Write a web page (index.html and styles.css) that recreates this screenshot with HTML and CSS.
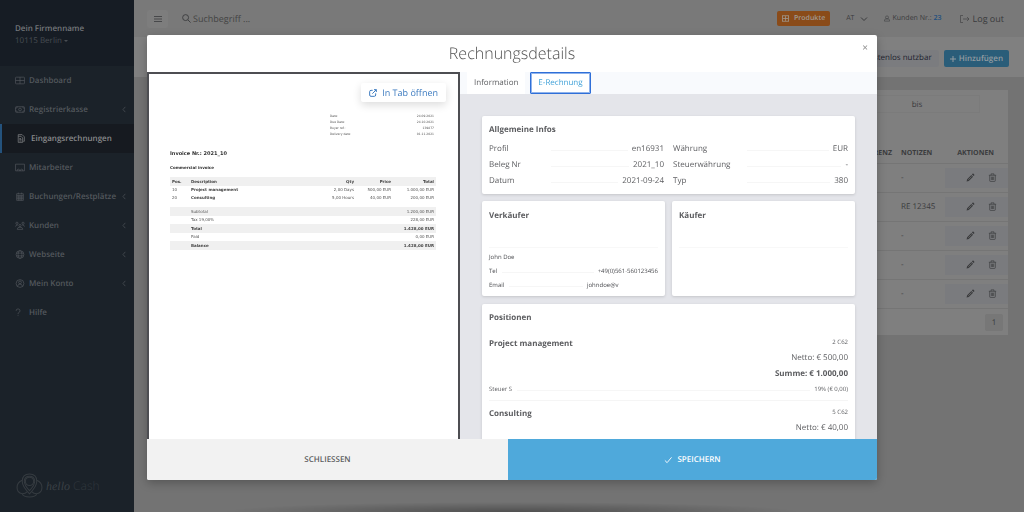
FILE: index.html
```html
<!DOCTYPE html>
<html lang="de">
<head>
<meta charset="utf-8">
<meta name="viewport" content="width=device-width, initial-scale=1">
<title>Eingangsrechnungen</title>
<link rel="stylesheet" href="styles.css">
</head>
<body>
<svg class="sprite" aria-hidden="true">
  <symbol id="chev-left" viewBox="0 0 6 10"><path d="M5 1 1.500 5 5 9"/></symbol>
  <symbol id="pencil" viewBox="0 0 16 16"><path fill="currentColor" stroke="none" d="M9.500 3.500 12.500 6.500 5 14 1 15 2 11zM10.500 2.500l1-1q1-1 2 0l1 1q1 1 0 2l-1 1z"/><path stroke="#7f7f7f" stroke-width="1" d="M4 12l6-6"/></symbol>
  <symbol id="trash" viewBox="0 0 16 16"><path d="M1.500 4h13M5.500 4V1.500h5V4M3 4v9.500q0 1.500 1.500 1.500h7q1.500 0 1.500-1.500V4M6 6.500v6M8 6.500v6M10 6.500v6"/></symbol>
</svg>
<div class="app">
  <aside class="sidebar">
    <header class="company">
      <strong class="company-name">Dein Firmenname</strong>
      <button class="company-place" type="button">10115 Berlin <span class="caret"></span></button>
    </header>
    <nav class="nav">
      <a class="nav-item" href="#"><svg class="nav-icon" viewBox="0 0 18 16"><rect x="1" y="2" width="16" height="12" rx="1"/><path d="M9 2v12M1 8h16"/></svg><span>Dashboard</span></a>
      <a class="nav-item" href="#"><svg class="nav-icon" viewBox="0 0 18 16"><rect x="1" y="3" width="16" height="10" rx="1"/><circle cx="9" cy="8" r="2.500"/><path d="M1 6q3 0 3-3M1 10q3 0 3 3M17 6q-3 0-3-3M17 10q-3 0-3 3"/></svg><span>Registrierkasse</span><svg class="chevron"><use href="#chev-left"/></svg></a>
      <a class="nav-item active" href="#" aria-current="page"><svg class="nav-icon" viewBox="0 0 18 16"><path d="M4 4V1h7l4 4v8h-2M4 4h5l3 3v8H4zM6 8h3M6 10h4M6 12.500h4"/></svg><span>Eingangsrechnungen</span></a>
      <a class="nav-item" href="#"><svg class="nav-icon" viewBox="0 0 18 16"><path d="M1 14V2h16v12zM4 14v-2q2-2 4 0v2M10 14v-2q2-2 4 0v2"/></svg><span>Mitarbeiter</span></a>
      <a class="nav-item" href="#"><svg class="nav-icon" viewBox="0 0 18 16"><path d="M3 3h12v12H3zM3 6h12M6 1v3M12 1v3M6 6v9M9 6v9M12 6v9M3 9h12M3 12h12"/></svg><span>Buchungen/Restplätze</span><svg class="chevron"><use href="#chev-left"/></svg></a>
      <a class="nav-item" href="#"><svg class="nav-icon" viewBox="0 0 18 16"><circle cx="9" cy="8" r="2"/><circle cx="3.500" cy="4" r="2"/><circle cx="14.500" cy="4" r="2"/><path d="M4 15q0-4 5-4t5 4zM1 10q0-3 4-3M17 10q0-3-4-3"/></svg><span>Kunden</span><svg class="chevron"><use href="#chev-left"/></svg></a>
      <a class="nav-item" href="#"><svg class="nav-icon" viewBox="0 0 18 16"><circle cx="9" cy="8" r="7"/><ellipse cx="9" cy="8" rx="3.500" ry="7"/><path d="M2.500 5.500h13M2.500 10.500h13"/></svg><span>Webseite</span><svg class="chevron"><use href="#chev-left"/></svg></a>
      <a class="nav-item" href="#"><svg class="nav-icon" viewBox="0 0 18 16"><circle cx="9" cy="8" r="7"/><circle cx="9" cy="6" r="2.500"/><path d="M4.500 13q1-4 4.500-4t4.500 4"/></svg><span>Mein Konto</span><svg class="chevron"><use href="#chev-left"/></svg></a>
      <a class="nav-item" href="#"><svg class="nav-icon" viewBox="0 0 18 16"><path d="M2 5q0-3.500 3.500-3.500T9 5q0 2-2 3t-1.500 3M5.500 13v1.500"/></svg><span>Hilfe</span></a>
    </nav>
    <div class="brand">
      <svg class="brand-mark" viewBox="0 0 26 24"><path d="M13 1q7 0 7 7 0 5-7 12Q6 13 6 8q0-7 7-7z"/><path d="M13 3q5 0 5 5 0 4-5 9-5-5-5-9 0-5 5-5z"/><circle cx="13" cy="8" r="4"/><path d="M6 7q-5 2-5 7t5 6q3 0 5-2M20 7q5 2 5 7t-5 6q-3 0-5-2M6 20q1 3 7 3t7-3"/></svg>
      <span class="brand-text"><em>hello</em> Cash</span>
    </div>
  </aside>

  <main class="main">
    <header class="topbar">
      <button class="menu-button" type="button" aria-label="Menü"><svg viewBox="0 0 8 8"><path d="M0 1.500h8M0 4h8M0 6.500h8"/></svg></button>
      <label class="search"><svg viewBox="0 0 10 10"><circle cx="4" cy="4" r="3.300"/><path d="m6.500 6.500 3 3"/></svg><input type="text" placeholder="Suchbegriff ..." aria-label="Suchbegriff"></label>
      <button class="products" type="button"><svg viewBox="0 0 9 8"><rect x=".5" y=".5" width="8" height="7"/><path d="M4.500 1v6M1 4h7"/></svg>Produkte</button>
      <button class="country" type="button">AT <svg viewBox="0 0 8 6"><path d="m1 1.500 3 3 3-3"/></svg></button>
      <span class="customer"><svg viewBox="0 0 8 8"><circle cx="4" cy="2.500" r="2"/><path d="M.5 7.500q0-3 2-3h3q2 0 2 3z"/></svg>Kunden Nr.: <b>23</b></span>
      <a class="logout" href="#"><svg viewBox="0 0 10 8"><path d="M3 .5H.5v7H3M3 4h6M7 2l2 2-2 2"/></svg>Log out</a>
    </header>
    <div class="pagebar">
      <span class="free">kostenlos nutzbar</span>
      <button class="add" type="button"><svg viewBox="0 0 6 6"><path d="M3 0v6M0 3h6"/></svg>Hinzufügen</button>
    </div>
    <section class="content">
      <div class="panel">
        <div class="filter"><button class="until" type="button">bis</button></div>
        <table class="list">
          <thead><tr><th class="c-ref">REFERENZ</th><th class="c-note">NOTIZEN</th><th class="c-act">AKTIONEN</th></tr></thead>
          <tbody>
            <tr><td></td><td>-</td><td><div class="actions"><button type="button" aria-label="Bearbeiten"><svg><use href="#pencil"/></svg></button><button type="button" aria-label="Löschen"><svg><use href="#trash"/></svg></button></div></td></tr>
            <tr><td></td><td>RE 12345</td><td><div class="actions"><button type="button" aria-label="Bearbeiten"><svg><use href="#pencil"/></svg></button><button type="button" aria-label="Löschen"><svg><use href="#trash"/></svg></button></div></td></tr>
            <tr><td></td><td>-</td><td><div class="actions"><button type="button" aria-label="Bearbeiten"><svg><use href="#pencil"/></svg></button><button type="button" aria-label="Löschen"><svg><use href="#trash"/></svg></button></div></td></tr>
            <tr><td></td><td>-</td><td><div class="actions"><button type="button" aria-label="Bearbeiten"><svg><use href="#pencil"/></svg></button><button type="button" aria-label="Löschen"><svg><use href="#trash"/></svg></button></div></td></tr>
            <tr><td></td><td>-</td><td><div class="actions"><button type="button" aria-label="Bearbeiten"><svg><use href="#pencil"/></svg></button><button type="button" aria-label="Löschen"><svg><use href="#trash"/></svg></button></div></td></tr>
          </tbody>
        </table>
        <div class="pager"><button type="button">1</button></div>
      </div>
    </section>
  </main>
</div>

<div class="overlay">
  <div class="modal" role="dialog" aria-modal="true" aria-labelledby="title">
    <header class="modal-head">
      <h1 id="title">Rechnungsdetails</h1>
      <button class="close" type="button" aria-label="Schließen">×</button>
    </header>
    <div class="modal-body">
      <section class="document">
        <a class="open-tab" href="#"><svg viewBox="0 0 12 12"><path d="M5.500 2H3q-2 0-2 2v5q0 2 2 2h5q2 0 2-2V6.500M7.500 1H11v3.500M11 1 5 7"/></svg>In Tab öffnen</a>
        <dl class="doc-meta">
          <div><dt>Date:</dt><dd>24.09.2021</dd></div>
          <div><dt>Due Date:</dt><dd>24.10.2021</dd></div>
          <div><dt>Buyer ref.:</dt><dd>139877</dd></div>
          <div><dt>Delivery date:</dt><dd>01.11.2021</dd></div>
        </dl>
        <h2 class="doc-title">Invoice Nr.: 2021_10</h2>
        <h3 class="doc-sub">Commercial invoice</h3>
        <table class="doc-table">
          <thead><tr><th class="d-pos">Pos.</th><th>Description</th><th class="num d-qty">Qty</th><th class="num d-price">Price</th><th class="num d-total">Total</th></tr></thead>
          <tbody>
            <tr><td>10</td><td><b>Project management</b></td><td class="num">2,00 Days</td><td class="num">500,00 EUR</td><td class="num">1.000,00 EUR</td></tr>
            <tr><td>20</td><td><b>Consulting</b></td><td class="num">5,00 Hours</td><td class="num">40,00 EUR</td><td class="num">200,00 EUR</td></tr>
          </tbody>
        </table>
        <table class="doc-table">
          <tbody>
            <tr class="shade"><td class="d-pos"></td><td>Subtotal</td><td class="num d-total">1.200,00 EUR</td></tr>
            <tr><td></td><td>Tax 19,00%</td><td class="num">228,00 EUR</td></tr>
            <tr class="shade strong"><td></td><td>Total</td><td class="num">1.428,00 EUR</td></tr>
            <tr><td></td><td>Paid</td><td class="num">0,00 EUR</td></tr>
            <tr class="shade strong"><td></td><td>Balance</td><td class="num">1.428,00 EUR</td></tr>
          </tbody>
        </table>
      </section>
      <section class="details">
        <div class="tabs" role="tablist">
          <button class="tab" type="button" role="tab" aria-selected="false">Information</button>
          <button class="tab selected" type="button" role="tab" aria-selected="true">E-Rechnung</button>
        </div>
        <div class="cards">
          <article class="card">
            <h2>Allgemeine Infos</h2>
            <div class="facts">
              <div class="fact"><span class="key">Profil</span><i class="leader"></i><span>en16931</span></div>
              <div class="fact"><span class="key wide">Währung</span><i class="leader"></i><span>EUR</span></div>
              <div class="fact"><span class="key">Beleg Nr</span><i class="leader"></i><span>2021_10</span></div>
              <div class="fact"><span class="key wide">Steuerwährung</span><i class="leader"></i><span>-</span></div>
              <div class="fact"><span class="key">Datum</span><i class="leader"></i><span>2021-09-24</span></div>
              <div class="fact"><span class="key wide">Typ</span><i class="leader"></i><span>380</span></div>
            </div>
          </article>
          <div class="parties">
            <article class="card party">
              <h2>Verkäufer</h2>
              <div class="contact">
                <p>John Doe</p>
                <div class="fact"><span>Tel</span><i class="leader"></i><span>+49(0)561-560123456</span></div>
                <div class="fact"><span>Email</span><i class="leader"></i><span class="mail">johndoe@v</span></div>
              </div>
            </article>
            <article class="card party">
              <h2>Käufer</h2>
              <div class="contact"></div>
            </article>
          </div>
          <article class="card positions">
            <h2>Positionen</h2>
            <div class="position">
              <div class="position-main">
                <h3>Project management</h3>
                <div class="amounts"><small>2 C62</small><span>Netto: € 500,00</span><b>Summe: € 1.000,00</b></div>
              </div>
              <div class="fact small"><span>Steuer S</span><i class="leader"></i><span>19% (€ 0,00)</span></div>
            </div>
            <div class="position">
              <div class="position-main">
                <h3>Consulting</h3>
                <div class="amounts"><small>5 C62</small><span>Netto: € 40,00</span></div>
              </div>
            </div>
          </article>
        </div>
      </section>
    </div>
    <footer class="modal-foot">
      <button class="dismiss" type="button">SCHLIESSEN</button>
      <button class="save" type="button"><svg viewBox="0 0 9 8"><path d="m1 4.500 2.500 2.500 5-6"/></svg>SPEICHERN</button>
    </footer>
  </div>
</div>
</body>
</html>
```
FILE: styles.css
```css
* { box-sizing: border-box; }

body {
  margin: 0;
  font: 8px/16px "Open Sans", "Noto Sans", sans-serif;
  text-rendering: geometricPrecision;
  color: #5c5d60;
  background: #737373;
}

button, input { font: inherit; color: inherit; border: 0; padding: 0; background: none; text-rendering: inherit; }
a { color: inherit; text-decoration: none; }
svg { fill: none; stroke: currentColor; flex: none; }
h1, h2, h3, p, dl, dd { margin: 0; }
.sprite { display: none; }

.app { display: flex; height: 100vh; overflow: hidden; }

/* Sidebar */
.sidebar { flex: none; width: 134px; display: flex; flex-direction: column; background: #1b2229; color: #53585d; }
.company { height: 66px; padding: 23px 15px 0; background: #161c24; display: flex; flex-direction: column; align-items: flex-start; }
.company-name { font-weight: 600; line-height: 12px; color: #74777b; }
.company-place { display: flex; align-items: center; gap: 2px; line-height: 12px; color: #484d53; }
.caret { border: 2px solid transparent; border-top-color: currentColor; border-bottom: 0; }
.nav-item { display: flex; align-items: center; gap: 4px; height: 29px; padding: 0 8px 0 15px; font-weight: 600; }
.nav-icon { width: 10px; height: 9px; stroke-width: 1.2; }
.nav-item.active { background: #161a20; border-left: 2px solid #24527c; padding-left: 14px; gap: 5px; color: #8a8b8d; }
.chevron { width: 4px; height: 7px; margin-left: auto; }
.brand { margin-top: auto; padding: 0 0 14px 16px; display: flex; align-items: center; gap: 3px; color: #353b40; }
.brand-mark { width: 27px; height: 25px; }
.brand-text { font-size: 12px; font-weight: 300; color: #30373d; }
.brand-text em { font-family: "Liberation Serif", serif; font-weight: 400; color: #3a4045; }

/* Page behind the dialog */
.main { flex: 1; min-width: 0; color: #3a3b3d; }
.topbar { display: flex; align-items: center; height: 37px; padding: 0 20px 0 13px; background: #797979; }
.menu-button { display: grid; place-items: center; width: 21px; height: 18px; background: #7d7d7d; border-radius: 2px; }
.menu-button svg { width: 8px; height: 8px; stroke-width: .8; }
.search { display: flex; align-items: center; gap: 2px; margin-left: 14px; margin-right: auto; }
.search svg { width: 9px; height: 9px; }
.search input { width: 90px; font-size: 9px; }
.search input::placeholder { color: #444; opacity: 1; }
.products { display: flex; align-items: center; gap: 5px; height: 15px; padding: 0 5px; background: #8a4b19; border-radius: 2px; color: #a09a92; font-weight: 600; font-size: 7px; }
.products svg { width: 7px; height: 7px; }
.country { display: flex; align-items: center; gap: 6px; margin-left: 16px; font-size: 7px; }
.country svg { width: 8px; height: 6px; }
.customer { display: flex; align-items: center; gap: 2px; margin-left: 16px; font-size: 7px; }
.customer svg { width: 6px; height: 7px; stroke-width: .7; }
.customer b { font-weight: 600; color: #1d4f80; }
.logout { display: flex; align-items: center; gap: 3px; margin-left: 18px; font-size: 9px; }
.logout svg { width: 10px; height: 8px; stroke-width: .6; }
.pagebar { display: flex; align-items: center; justify-content: flex-end; gap: 5px; height: 40px; padding: 3px 15px 0; background: #808080; }
.free { height: 17px; padding: 0 7px; background: #7b7c7f; color: #20222e; border-radius: 2px; }
.add { display: flex; align-items: center; gap: 3px; height: 17px; padding: 0 6px; background: #2a5d79; border-radius: 2px; color: #929ca1; font-weight: 600; }
.add svg { width: 6px; height: 6px; }
.content { padding: 13px 16px; }
.panel { background: #7f7f7f; }
.filter { display: flex; justify-content: flex-end; padding: 5px 28px 30px; }
.until { width: 126px; height: 18px; padding-top: 1px; border: 1px solid #7b7b7b; }
.list { width: 100%; border-collapse: collapse; table-layout: fixed; }
.list th { height: 20px; padding: 2px 0 0; font-size: 7px; font-weight: 700; text-align: left; }
.list td { height: 29px; padding: 0; border-top: 1px solid #757575; }
.list .c-ref { text-align: right; padding-right: 9px; }
.list .c-note { width: 44px; }
.list .c-act { width: 63px; padding-right: 14px; text-align: right; }
.actions { display: flex; justify-content: flex-end; align-items: center; gap: 13px; height: 20px; padding-right: 11px; background: #7a7b7e; }
.actions button { display: flex; }
.actions svg { width: 9px; height: 9px; stroke-width: 1.2; }
.pager { display: flex; justify-content: flex-end; padding: 5px 5px 4px; border-top: 1px solid #757575; }
.pager button { width: 18px; height: 17px; background: #777; border-radius: 2px; }

/* Dialog */
.overlay {
  position: fixed;
  inset: 0;
  display: flex;
  justify-content: center;
  padding: 35px 20px 32px;
  background: radial-gradient(50% 100% at 50% 100%, rgba(0, 0, 0, .3), transparent) bottom / 56% 10px no-repeat;
}
.modal { display: flex; flex-direction: column; width: 100%; max-width: 730px; background: #fff; border-radius: 2px; overflow: hidden; box-shadow: 0 3px 10px rgba(0, 0, 0, .25); }
.modal-head { position: relative; flex: none; height: 37px; }
.modal-head h1 { font-size: 16px; font-weight: 300; line-height: 37px; text-align: center; color: #505050; }
.close { position: absolute; top: 4px; right: 7px; width: 10px; font-size: 10px; color: #8b8b8b; }
.modal-body { flex: 1; min-height: 0; display: grid; grid-template-columns: minmax(0, 313fr) minmax(0, 417fr); overflow: hidden; }

.document { padding: 9px 22px 0 21px; border: 2px solid #4d4e52; border-bottom: 0; font: 4px/9px "DejaVu Sans", sans-serif; color: #555; display: flex; flex-direction: column; }
.open-tab { display: flex; align-items: center; gap: 5px; align-self: flex-end; height: 19px; margin-right: -10px; padding: 0 8px; border-radius: 2px; box-shadow: 0 3px 8px rgba(0, 0, 0, .14); font: 9px/19px "Open Sans", sans-serif; color: #3e7cc0; }
.open-tab svg { width: 8px; height: 8px; stroke-width: 1.5; }
.doc-meta { align-self: flex-end; width: 106px; margin-top: 11px; padding-right: 2px; font-size: 3px; line-height: 6px; }
.doc-meta div { display: flex; justify-content: space-between; height: 6px; }
.doc-title { margin-top: 12px; font-size: 5px; line-height: 10px; color: #333; }
.doc-sub { margin-top: 4px; font-size: 4px; line-height: 9px; color: #333; }
.doc-table { width: 100%; margin-top: 5px; border-collapse: collapse; table-layout: fixed; }
.doc-table td, .doc-table th { height: 8px; padding: 0 2px; line-height: 8px; text-align: left; }
.doc-table th, .doc-table .shade td { height: 9px; }
.doc-table .d-pos { width: 19px; }
.doc-table .d-qty { width: 40px; }
.doc-table .d-price { width: 37px; }
.doc-table .d-total { width: 43px; }
.doc-table .num { text-align: right; }
.doc-table thead, .shade { background: #f0f0f0; }
.strong td { font-weight: 700; }
.doc-table b, .doc-table th, .strong { color: #444; }

.details { background: #e4e5ea; }
.tabs { display: flex; height: 22px; padding-left: 7px; background: #f8fafd; }
.tab { padding: 0 7px; background: #fff; }
.tab.selected { margin-left: 5px; border: 1px solid #2f6fd8; border-radius: 1px; color: #3fa1d8; outline: 1px solid #8fb3ec; outline-offset: -2px; }
.cards { display: flex; flex-direction: column; gap: 7px; padding: 22px; }
.card { padding: 4px 7px 5px; background: #fff; border-radius: 2px; box-shadow: 0 1px 3px rgba(0, 0, 0, .14); }
.card h2 { font-size: 8px; line-height: 20px; font-weight: 700; }
.facts { display: grid; grid-template-columns: 1fr 1fr; column-gap: 9px; padding-top: 1px; }
.fact { display: flex; align-items: baseline; }
.key { width: 62px; }
.key.wide { width: 74px; }
.leader { flex: 1; margin-right: 4px; border-bottom: 1px solid #f6f6f6; }
.parties { display: grid; grid-template-columns: 1fr 1fr; gap: 7px; }
.party { min-height: 95px; padding: 5px 7px 3px; }
.contact { margin-top: 21px; padding-top: 2px; border-top: 1px solid #f8f8f8; font-size: 6px; line-height: 14px; color: #4b4c50; }
.contact .leader, .small .leader { margin-left: 5px; }
.mail { width: 71px; }
.positions { margin-top: 1px; }
.positions h2 { margin-bottom: 7px; }
.position { margin-bottom: 4px; padding-bottom: 4px; border-bottom: 1px solid #f5f5f5; }
.position-main { display: flex; justify-content: space-between; }
.position h3 { padding-top: 1px; font-size: 8px; font-weight: 700; line-height: 16px; }
.amounts { display: flex; flex-direction: column; align-items: flex-end; }
.amounts small { font-size: 6px; line-height: 15px; }
.small { font-size: 6px; line-height: 14px; }

.modal-foot { flex: none; display: flex; height: 41px; font-weight: 600; }
.modal-foot button { padding-top: 1px; }
.dismiss { flex: 361; background: #f2f2f2; }
.save { flex: 369; display: flex; align-items: center; justify-content: center; gap: 5px; background: #4fa9db; color: #fff; }
.save svg { width: 8px; height: 8px; }
```
